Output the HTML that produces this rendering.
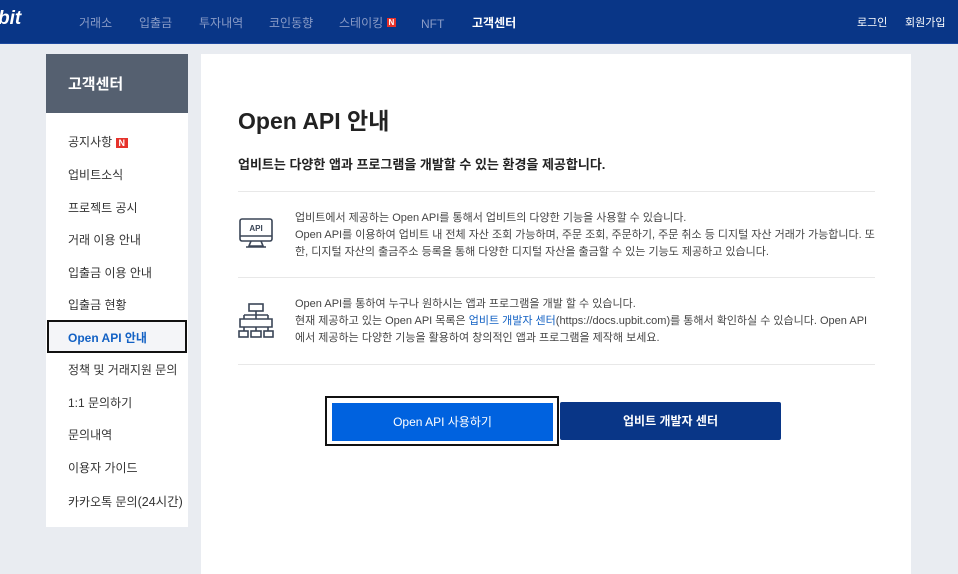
<!DOCTYPE html>
<html><head><meta charset="utf-8"><style>
*{margin:0;padding:0;box-sizing:border-box}
body{width:958px;height:568px;overflow:hidden;background:#e9ecf1;font-family:"Liberation Sans","Noto Sans CJK KR",sans-serif;position:relative}
.hd{position:absolute;left:0;top:0;width:958px;height:44px;background:#093687;border-bottom:1px solid #1d4aa0}
.hd span{position:absolute;top:15px;font-size:12px;color:#8a9cc7;line-height:16px}
.logo{left:-2px!important;top:11px!important;font-size:19px!important;font-weight:bold;font-style:italic;color:#fff!important}
.side{position:absolute;left:46px;top:54px;width:142px;height:473px;background:#fff}
.side .t{height:59px;background:#556070;color:#fff;font-weight:bold;font-size:15px;padding:19px 0 0 22px}
.side div.i{position:absolute;left:22px;font-size:12px;color:#333}
.sel{position:absolute;left:1px;top:266px;width:140px;height:33px;border:2px solid #111;background:#f4f5f8}
.main{position:absolute;left:201px;top:54px;width:710px;height:520px;background:#fff}
h1{position:absolute;left:37px;top:48px;font-size:23px;font-weight:bold;color:#222}
.sub{position:absolute;left:37px;top:100px;font-size:13px;font-weight:bold;color:#222}
.ln{position:absolute;left:37px;width:637px;height:1px;background:#e8e8e8}
.tx{position:absolute;left:94px;font-size:11px;line-height:17px;color:#444;width:580px}
.tx a{color:#1261c4;text-decoration:none}
.b1{position:absolute;left:124px;top:342px;width:234px;height:50px;border:2px solid #111}
.b1 div{position:absolute;left:5px;top:5px;width:221px;height:38px;background:#0062df;color:#fff;font-size:12px;text-align:center;line-height:38px}
.b2{position:absolute;left:359px;top:348px;width:221px;height:38px;background:#093687;color:#fff;font-size:12px;font-weight:bold;text-align:center;line-height:38px;border-radius:2px}
</style></head><body>
<div class="hd">
<span class="logo">bit</span>
<span style="left:79px">거래소</span><span style="left:139px">입출금</span><span style="left:199px">투자내역</span><span style="left:269px">코인동향</span><span style="left:339px">스테이킹 <b style="background:#e6322b;color:#fff;font-size:8px;padding:0 2px;vertical-align:2px">N</b></span><span style="left:421px;top:16px">NFT</span><span style="left:472px;color:#fff;font-weight:bold">고객센터</span>
<span style="left:857px;color:#fff;font-size:11px">로그인</span><span style="left:905px;color:#fff;font-size:11px">회원가입</span>
</div>
<div class="side"><div class="t">고객센터</div>
<div class="sel"></div>
<div class="i" style="top:79px">공지사항 <b style="background:#e6322b;color:#fff;font-size:9px;padding:0 3px">N</b></div>
<div class="i" style="top:112px">업비트소식</div>
<div class="i" style="top:145px">프로젝트 공시</div>
<div class="i" style="top:177px">거래 이용 안내</div>
<div class="i" style="top:210px">입출금 이용 안내</div>
<div class="i" style="top:242px">입출금 현황</div>
<div class="i" style="top:275px;color:#1261c4;font-weight:bold">Open API 안내</div>
<div class="i" style="top:307px">정책 및 거래지원 문의</div>
<div class="i" style="top:340px">1:1 문의하기</div>
<div class="i" style="top:372px">문의내역</div>
<div class="i" style="top:405px">이용자 가이드</div>
<div class="i" style="top:437px">카카오톡 문의<span style="font-size:12.5px">(24시간)</span></div>
</div>
<div class="main">
<h1>Open API 안내</h1>
<div class="sub">업비트는 다양한 앱과 프로그램을 개발할 수 있는 환경을 제공합니다.</div>
<div class="ln" style="top:137px"></div>
<div class="ln" style="top:223px"></div>
<div class="ln" style="top:310px"></div>
<svg style="position:absolute;left:37px;top:163px" width="36" height="34" fill="none" stroke="#3a4556" stroke-width="1.6"><rect x="2" y="2" width="32" height="22" rx="2"/><line x1="2" y1="19" x2="34" y2="19"/><path d="M13 24 L11 29 H25 L23 24 M8 30 H28"/><text x="18" y="14" font-size="8" font-weight="bold" fill="#3a4556" stroke="none" text-anchor="middle" font-family="Liberation Sans">API</text></svg>
<div class="tx" style="top:156px">업비트에서 제공하는 Open API를 통해서 업비트의 다양한 기능을 사용할 수 있습니다.<br>Open API를 이용하여 업비트 내 전체 자산 조회 가능하며, 주문 조회, 주문하기, 주문 취소 등 디지털 자산 거래가 가능합니다. 또한, 디지털 자산의 출금주소 등록을 통해 다양한 디지털 자산을 출금할 수 있는 기능도 제공하고 있습니다.</div>
<svg style="position:absolute;left:37px;top:248px" width="36" height="36" fill="none" stroke="#3a4556" stroke-width="1.6"><rect x="11" y="2" width="14" height="7"/><path d="M18 9V13 M6 13H30 M6 13V17 M18 13V17 M30 13V17 M2 17H34V25H2Z M6 25V29 M18 25V29 M30 25V29"/><rect x="1" y="29" width="9" height="6"/><rect x="13" y="29" width="10" height="6"/><rect x="26" y="29" width="9" height="6"/></svg>
<div class="tx" style="top:242px">Open API를 통하여 누구나 원하시는 앱과 프로그램을 개발 할 수 있습니다.<br>현재 제공하고 있는 Open API 목록은 <a>업비트 개발자 센터</a>(https://docs.upbit.com)를 통해서 확인하실 수 있습니다. Open API에서 제공하는 다양한 기능을 활용하여 창의적인 앱과 프로그램을 제작해 보세요.</div>
<div class="b1"><div>Open API 사용하기</div></div>
<div class="b2">업비트 개발자 센터</div>
</div>
</body></html>
